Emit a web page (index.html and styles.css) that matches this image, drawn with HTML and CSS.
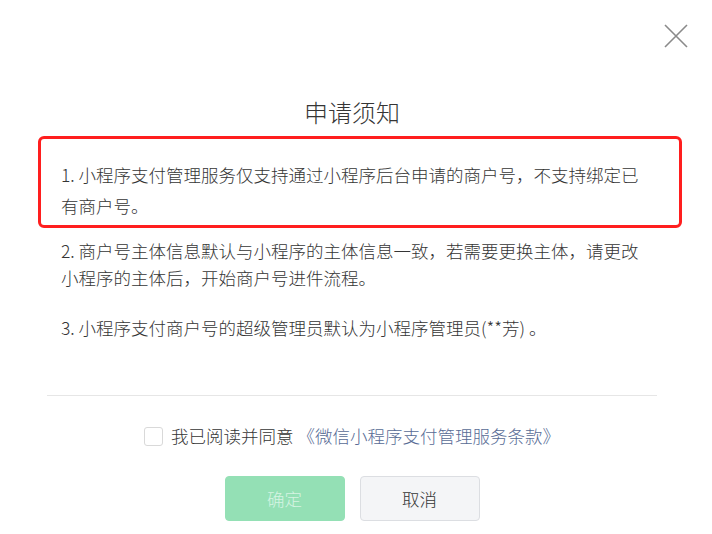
FILE: index.html
```html
<!DOCTYPE html>
<html lang="zh-CN">
<head>
<meta charset="utf-8">
<title>申请须知</title>
<link rel="stylesheet" href="styles.css">
</head>
<body>
<div class="dialog">
  <button class="close" aria-label="关闭">
    <svg width="24" height="24" viewBox="0 0 24 24"><path d="M1 1 L23 23 M23 1 L1 23" stroke="#8a8a8a" stroke-width="1.6" fill="none"/></svg>
  </button>
  <h1 class="title">申请须知</h1>
  <div class="highlight">
    <p class="item item-first">1. 小程序支付管理服务仅支持通过小程序后台申请的商户号，不支持绑定已有商户号。</p>
  </div>
  <p class="item item-second">2. 商户号主体信息默认与小程序的主体信息一致，若需要更换主体，请更改小程序的主体后，开始商户号进件流程。</p>
  <p class="item item-third">3. 小程序支付商户号的超级管理员默认为小程序管理员(**芳) 。</p>
  <div class="divider"></div>
  <label class="agree">
    <span class="checkbox"></span>
    <span class="agree-text">我已阅读并同意</span>
    <a class="link">《微信小程序支付管理服务条款》</a>
  </label>
  <div class="actions">
    <button class="btn btn-primary">确定</button>
    <button class="btn btn-default">取消</button>
  </div>
</div>
</body>
</html>
```

FILE: styles.css
```css
* { box-sizing: border-box; }
html, body {
  margin: 0;
  padding: 0;
  background: #fff;
}
body {
  font-family: "Noto Sans CJK SC", "Noto Sans", sans-serif;
  font-weight: 300;
  color: #353535;
}
.dialog {
  position: relative;
  width: 704px;
  height: 534px;
  padding-top: 96px;
}
.close {
  position: absolute;
  top: 24px;
  right: 16px;
  width: 24px;
  height: 24px;
  padding: 0;
  border: 0;
  background: none;
}
.close svg { display: block; }
.title {
  margin: 0;
  font-size: 24px;
  font-weight: 300;
  line-height: 32px;
  text-align: center;
  color: #353535;
}
.highlight {
  margin: 8px 22px 0 38px;
  border: 3px solid #ff1e1e;
  border-radius: 6px;
  padding: 20px 0 4px 20px;
  height: 92px;
}
.item {
  margin: 0;
  width: 586px;
  font-size: 17.5px;
  color: #353535;
}
.item-first {
  line-height: 31px;
}
.item-second {
  margin: 9px 0 0 61px;
  line-height: 27px;
}
.item-third {
  margin: 23px 0 0 61px;
  line-height: 27px;
}
.divider {
  margin: 54px 0 0 47px;
  width: 610px;
  height: 1px;
  background: #e6e6e6;
}
.agree {
  display: flex;
  align-items: center;
  justify-content: center;
  margin-top: 29px;
  height: 22px;
  font-size: 17.5px;
  line-height: 22px;
}
.checkbox {
  width: 19px;
  height: 19px;
  border: 1px solid #d9d9d9;
  border-radius: 3px;
  background: #fff;
  margin-right: 8px;
}
.agree-text {
  color: #353535;
  margin-right: 4px;
}
.link {
  color: #576b95;
}
.actions {
  display: flex;
  justify-content: center;
  gap: 15px;
  margin-top: 29px;
}
.btn {
  width: 120px;
  height: 45px;
  border-radius: 4px;
  font-family: "Noto Sans CJK SC", "Noto Sans", sans-serif;
  font-weight: 300;
  font-size: 17.5px;
  padding: 0;
}
.btn-primary {
  background: #94e0b5;
  border: 1px solid #94e0b5;
  color: #d6f4e3;
}
.btn-default {
  background: #f4f5f7;
  border: 1px solid #dcdee2;
  color: #353535;
}
```
